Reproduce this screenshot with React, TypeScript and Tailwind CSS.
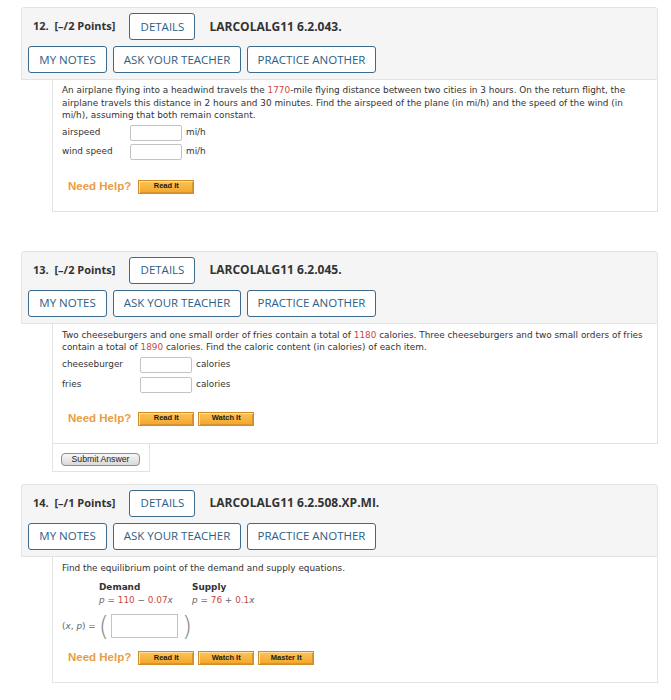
import type { ReactNode } from 'react'

const headFont = { fontFamily: '"Open Sans", "DejaVu Sans", sans-serif' }
const bodyFont = { fontFamily: '"DejaVu Sans", Verdana, sans-serif' }
const arial = { fontFamily: '"Liberation Sans", Arial, sans-serif' }

const Red = ({ children }: { children: ReactNode }) => (
  <span className="text-[#c94a45]">{children}</span>
)

function OutlineButton({ label, width }: { label: string; width: string }) {
  return (
    <span
      className={`inline-flex h-[27px] items-center justify-center rounded-[3px] border-[1.5px] border-[#3b6a8c] bg-white text-[11.5px] text-[#2c5e86] ${width}`}
    >
      {label}
    </span>
  )
}

function QuestionHeader({ num, points, code }: { num: number; points: number; code: string }) {
  return (
    <div
      className="rounded-t-[3px] border border-[#e3e3e3] bg-[#f5f5f5] pb-[6px] pl-[6px] pt-[5px]"
      style={headFont}
    >
      <div className="flex h-[27px] items-center gap-[14px] pl-[5px]">
        <span className="text-[11px] font-bold text-[#333]">
          {num}.&nbsp; [–/{points} Points]
        </span>
        <OutlineButton label="DETAILS" width="w-[66px]" />
        <span className="text-[12px] font-bold text-[#333]">{code}</span>
      </div>
      <div className="mt-[6px] flex gap-[6px]">
        <OutlineButton label="MY NOTES" width="w-[79px]" />
        <OutlineButton label="ASK YOUR TEACHER" width="w-[128px]" />
        <OutlineButton label="PRACTICE ANOTHER" width="w-[129px]" />
      </div>
    </div>
  )
}

function HelpButton({ label }: { label: string }) {
  return (
    <span
      className="inline-flex h-[14px] w-[56px] items-center justify-center border border-[#d08d2a] bg-linear-to-b from-[#fcc455] to-[#f3a52a] text-[7.5px] font-bold text-[#1a1a1a] shadow-[inset_1px_1px_0_#fde0a0,inset_-1px_-1px_0_#d9952f]"
      style={arial}
    >
      {label}
    </span>
  )
}

function NeedHelp({ buttons }: { buttons: string[] }) {
  return (
    <div className="flex h-[14px] items-center pl-[6px]">
      <span className="mr-[7px] text-[11.5px] font-bold leading-none text-[#e89d45]" style={arial}>
        Need Help?
      </span>
      <div className="flex gap-[4px]">
        {buttons.map((b) => (
          <HelpButton key={b} label={b} />
        ))}
      </div>
    </div>
  )
}

function AnswerRow({ label, unit, labelWidth }: { label: string; unit: string; labelWidth: string }) {
  return (
    <div className="flex h-[16px] items-center">
      <span className={labelWidth}>{label}</span>
      <span className="h-[16px] w-[52px] rounded-[2px] border border-[#c4c4c4] bg-white" />
      <span className="ml-[4px]">{unit}</span>
    </div>
  )
}

export default function App() {
  return (
    <div className="min-h-screen bg-white pt-[7px]">
      <div className="ml-[21px] w-[637px]">
        {/* Question 12 */}
        <QuestionHeader num={12} points={2} code="LARCOLALG11 6.2.043." />
        <div
          className="ml-[31px] border-x border-b border-[#e3e3e3] bg-white pb-[17px] pl-[9px] pr-[7px] pt-[4px] text-[8.9px] leading-[12.5px] text-[#333]"
          style={bodyFont}
        >
          <p>
            An airplane flying into a headwind travels the <Red>1770</Red>-mile flying distance between two
            cities in 3 hours. On the return flight, the airplane travels this distance in 2 hours and 30
            minutes. Find the airspeed of the plane (in mi/h) and the speed of the wind (in mi/h), assuming that
            both remain constant.
          </p>
          <div className="mt-[3px] flex flex-col gap-[3px]">
            <AnswerRow label="airspeed" unit="mi/h" labelWidth="w-[68px]" />
            <AnswerRow label="wind speed" unit="mi/h" labelWidth="w-[68px]" />
          </div>
          <div className="mt-[20px]">
            <NeedHelp buttons={['Read It']} />
          </div>
        </div>

        {/* Question 13 */}
        <div className="mt-[39px]">
          <QuestionHeader num={13} points={2} code="LARCOLALG11 6.2.045." />
        </div>
        <div
          className="ml-[31px] border-x border-b border-[#e3e3e3] bg-white pb-[17px] pl-[9px] pr-[7px] pt-[5px] text-[8.9px] leading-[12.5px] text-[#333]"
          style={bodyFont}
        >
          <p>
            Two cheeseburgers and one small order of fries contain a total of <Red>1180</Red> calories. Three
            cheeseburgers and two small orders of fries contain a total of <Red>1890</Red> calories. Find the
            caloric content (in calories) of each item.
          </p>
          <div className="mt-[3px] flex flex-col gap-[4px]">
            <AnswerRow label="cheeseburger" unit="calories" labelWidth="w-[78px]" />
            <AnswerRow label="fries" unit="calories" labelWidth="w-[78px]" />
          </div>
          <div className="mt-[19px]">
            <NeedHelp buttons={['Read It', 'Watch It']} />
          </div>
        </div>
        <div className="ml-[31px] flex w-[98px] border-x border-b border-[#e3e3e3] pb-[5px] pl-[8px] pt-[9px]">
          <span
            className="inline-flex h-[13px] w-[79px] items-center justify-center rounded-[4px] border border-[#8e8e8e] bg-linear-to-b from-[#f7f7f7] to-[#d9d9d9] text-[8.7px] leading-none text-[#222]"
            style={arial}
          >
            Submit Answer
          </span>
        </div>

        {/* Question 14 */}
        <div className="mt-[12px]">
          <QuestionHeader num={14} points={1} code="LARCOLALG11 6.2.508.XP.MI." />
        </div>
        <div
          className="ml-[31px] border-x border-b border-[#e3e3e3] bg-white pb-[17px] pl-[9px] pr-[7px] pt-[5px] text-[8.9px] leading-[12.5px] text-[#333]"
          style={bodyFont}
        >
          <p>Find the equilibrium point of the demand and supply equations.</p>
          <div className="ml-[37px] mt-[7px] grid w-[200px] grid-cols-[93px_1fr]">
            <span className="font-bold">Demand</span>
            <span className="font-bold">Supply</span>
            <span className="text-[#666]">
              <i>p</i> = <Red>110</Red> − <Red>0.07</Red>
              <i>x</i>
            </span>
            <span className="text-[#666]">
              <i>p</i> = <Red>76</Red> + <Red>0.1</Red>
              <i>x</i>
            </span>
          </div>
          <div className="mt-[8px] flex h-[24px] items-center text-[#666]">
            <span>
              (<i>x</i>, <i>p</i>) =
            </span>
            <span className="ml-[3px] text-[26px] font-extralight leading-none text-[#888]">(</span>
            <span className="ml-[2px] h-[24px] w-[67px] border border-[#c4c4c4] bg-white" />
            <span className="ml-[4px] text-[26px] font-extralight leading-none text-[#888]">)</span>
          </div>
          <div className="mt-[13px]">
            <NeedHelp buttons={['Read It', 'Watch It', 'Master It']} />
          </div>
        </div>
      </div>
    </div>
  )
}
